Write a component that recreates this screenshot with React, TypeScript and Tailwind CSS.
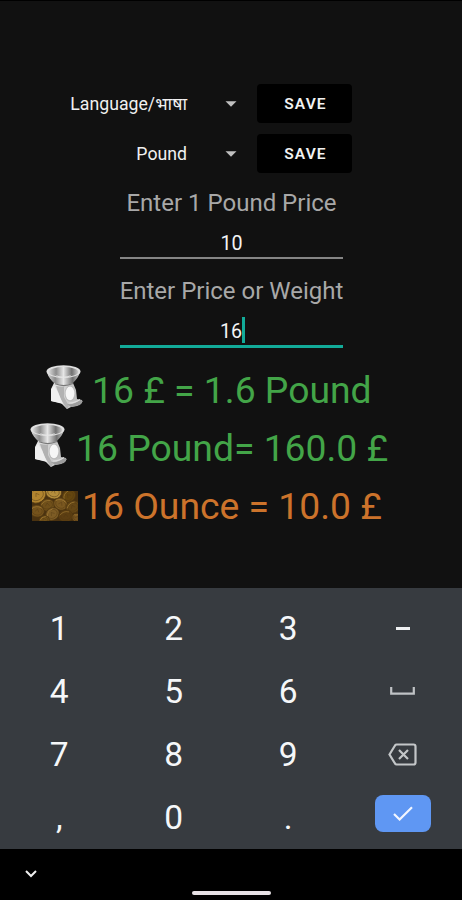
import React from "react";

function Caret() {
  return (
    <svg className="ml-[38px] h-[6px] w-[12px] shrink-0" viewBox="0 0 12 6">
      <path d="M0.5 0.3h11L6 5.8z" fill="#c0c0c0" />
    </svg>
  );
}

function SpinnerRow({ label }: { label: string }) {
  return (
    <div className="flex h-[39px] items-center">
      <div className="w-[187px] whitespace-nowrap pt-px text-right text-[17.7px] text-[#f0f0f0]">{label}</div>
      <Caret />
      <button className="ml-[20px] h-[39px] w-[95px] rounded-[4px] bg-black pl-[2px] pt-[2px] text-[15.5px] font-semibold tracking-[1.1px] text-[#f2f2f2]">
        SAVE
      </button>
    </div>
  );
}

function ScaleIcon() {
  return (
    <svg className="mb-[2px] h-[45px] w-[38px] shrink-0" viewBox="0 0 38 45">
      <defs>
        <linearGradient id="bowl" x1="0" x2="1">
          <stop offset="0" stopColor="#dadada" />
          <stop offset="0.25" stopColor="#8c8c8c" />
          <stop offset="0.5" stopColor="#e6e6e6" />
          <stop offset="0.78" stopColor="#707070" />
          <stop offset="1" stopColor="#cccccc" />
        </linearGradient>
        <linearGradient id="body" x1="0" x2="1">
          <stop offset="0" stopColor="#e8e8e8" />
          <stop offset="0.5" stopColor="#cfcfcf" />
          <stop offset="1" stopColor="#b4b4b4" />
        </linearGradient>
      </defs>
      <path d="M8 18H27L30 25L31 34L36 35V38L31 41L25 42L21 44L15 38L5 36V24Z" fill="url(#body)" />
      <path d="M10 21L14 33L21 44L23 41L18 32L18 22Z" fill="#b2b2b2" />
      <path d="M8 21L5 25V36L17 39L12 27Z" fill="#efefef" />
      <path d="M1 7C2 12 5 15 8 18Q18 22 27 18C30 15 33 11 34 7Z" fill="url(#bowl)" />
      <ellipse cx="17.5" cy="6.5" rx="17" ry="6.3" fill="#e0e0e0" />
      <ellipse cx="17.5" cy="7" rx="14.8" ry="4.9" fill="url(#bowl)" />
      <path d="M9 9.5Q17 14 26 9.5L22 12.5H13Z" fill="#eeeeee" opacity=".7" />
      <path d="M9 18.8Q18 22.5 27 18.5" stroke="#777" strokeWidth="1.2" fill="none" />
      <ellipse cx="24.2" cy="28.6" rx="5.6" ry="8" fill="#bbbbbb" />
      <ellipse cx="24" cy="28.4" rx="4.4" ry="6.8" fill="#f6f6f6" />
      <path d="M21 39Q28 40 34 35L37 36L34 40L25 42Z" fill="#9c9c9c" />
      <path d="M23 38Q29 38 34 34.5" stroke="#dedede" strokeWidth="1.2" fill="none" />
    </svg>
  );
}

const coins = [
  [36, 5, 7, "#65460f"], [15, 14, 7, "#70501a"], [28, 13, 7, "#7a5820"],
  [40, 16, 7, "#654716"], [5, 20, 7, "#75531c"], [20, 23, 7, "#7d5c25"],
  [33, 25, 7, "#5c3e12"], [44, 27, 5, "#75531f"], [12, 29, 5, "#705119"],
  [21, 1, 8, "#b48d3c"], [5, 4, 9, "#b1842f"],
] as const;

function CoinsPicture() {
  return (
    <svg className="mt-[4px] h-[30px] w-[46px] shrink-0" viewBox="0 0 45 30" preserveAspectRatio="none">
      <rect width="45" height="30" fill="#4a3210" />
      {coins.map(([x, y, r, fill], i) => (
        <g key={i} transform={`translate(${x} ${y}) rotate(${(i * 37) % 90 - 45})`}>
          <ellipse rx={r} ry={r * 0.86} fill={fill} stroke="#503711" strokeWidth="0.7" />
          <ellipse rx={r * 0.72} ry={r * 0.58} fill="none" stroke="#503711" strokeWidth="0.6" opacity=".7" />
          <path d={`M${-r * 0.8} -1Q${-r * 0.3} ${-r * 0.8} ${r * 0.5} ${-r * 0.55}`} stroke="#cfa24b" strokeWidth="0.8" fill="none" opacity=".5" />
          <path d="M-2 1L0-2L2 1" stroke="#4f3511" strokeWidth="0.6" fill="none" opacity=".6" />
        </g>
      ))}
    </svg>
  );
}

function Key({ children }: { children: React.ReactNode }) {
  return <div className="flex h-[63.2px] items-center justify-center">{children}</div>;
}

export default function App() {
  return (
    <div
      className="flex h-[900px] w-[462px] flex-col overflow-hidden bg-[#111111]"
      style={{ fontFamily: 'Roboto, "Noto Sans Devanagari", "Noto Sans", sans-serif' }}
    >
      <div className="h-px w-full shrink-0 bg-black" />
      <main className="flex h-[587px] shrink-0 flex-col pt-[83px]">
        <SpinnerRow label="Language/भाषा" />
        <div className="h-[11px]" />
        <SpinnerRow label="Pound" />

        <div className="mx-auto mt-[16px] h-[28px] whitespace-nowrap pl-px text-[24px] leading-[28px] text-[#a8a8a8]">Enter 1 Pound Price</div>
        <div className="mx-auto mt-[12px] flex h-[28px] w-[223px] items-center justify-center pl-px pt-[2px] text-[19.7px] text-[#f4f4f4]">10</div>
        <div className="mx-auto h-[2px] w-[223px] bg-[#858585]" />

        <div className="mx-auto mt-[18px] h-[28px] whitespace-nowrap pl-px text-[24px] leading-[28px] text-[#a8a8a8]">Enter Price or Weight</div>
        <div className="mx-auto mt-[11px] flex h-[29px] w-[223px] items-center justify-center pt-[2px] text-[19.7px] text-[#f4f4f4]">
          16<span className="-mr-[3px] mb-[3px] h-[26px] w-[3px] bg-[#12ab99]" />
        </div>
        <div className="mx-auto h-[3px] w-[223px] bg-[#12ab99]" />

        <div className="mt-[15px] flex h-[50px] items-center whitespace-nowrap pl-[46px] text-[37.3px] leading-none text-[#43a548]">
          <ScaleIcon />
          <span className="ml-[8px] mt-[6px]">16 £ = 1.6 Pound</span>
        </div>
        <div className="mt-[8px] flex h-[50px] items-center whitespace-nowrap pl-[30px] text-[37.3px] leading-none text-[#43a548]">
          <ScaleIcon />
          <span className="ml-[8px] mt-[6px]">16 Pound= 160.0 £</span>
        </div>
        <div className="mt-[8px] flex h-[50px] items-center whitespace-nowrap pl-[32px] text-[37.3px] leading-none text-[#cc732b]">
          <CoinsPicture />
          <span className="ml-[4px] mt-[6px]">16 Ounce = 10.0 £</span>
        </div>
      </main>

      <section className="grid h-[261px] shrink-0 grid-cols-4 content-start bg-[#373b40] px-[2px] pt-[9px] text-[33.5px] leading-none text-[#f5f7f9]">
        <Key>1</Key>
        <Key>2</Key>
        <Key>3</Key>
        <Key><span className="h-[3px] w-[14px] bg-[#eef0f2]" /></Key>
        <Key>4</Key>
        <Key>5</Key>
        <Key>6</Key>
        <Key>
          <svg className="mb-[2px] h-[8px] w-[25px]" viewBox="0 0 25 8">
            <path d="M1.2 0v6.7h22.6V0" fill="none" stroke="#bfc2c5" strokeWidth="2.2" />
          </svg>
        </Key>
        <Key>7</Key>
        <Key>8</Key>
        <Key>9</Key>
        <Key>
          <svg className="h-[23px] w-[29px]" viewBox="0 0 29 23" fill="none" stroke="#c3c6c8" strokeWidth="2.2">
            <path d="M8.6 1.5H25.5Q27.5 1.5 27.5 3.5V19.5Q27.5 21.5 25.5 21.5H8.6Q7.7 21.5 7 20.5L1.5 11.5L7 2.5Q7.7 1.5 8.6 1.5Z" />
            <path d="M11 7l9 9M20 7l-9 9" />
          </svg>
        </Key>
        <Key>,</Key>
        <Key>0</Key>
        <Key>.</Key>
        <Key>
          <div className="mb-[9px] flex h-[37px] w-[56px] items-center justify-center rounded-[8px] bg-[#5f97f3]">
            <svg className="h-[15px] w-[20px]" viewBox="0 0 20 15" fill="none" stroke="#f2f6ff" strokeWidth="2.2">
              <path d="M1 8l5.6 5.5L19 1.2" />
            </svg>
          </div>
        </Key>
      </section>

      <footer className="flex h-[51px] shrink-0 flex-col bg-black">
        <svg className="ml-[25px] mt-[21px] h-[8px] w-[12px]" viewBox="0 0 12 8" fill="none" stroke="#eeeeee" strokeWidth="2">
          <path d="M1 1l5 5 5-5" />
        </svg>
        <div className="mx-auto mt-[13px] h-[4px] w-[79px] rounded-full bg-[#e8e2e6]" />
      </footer>
    </div>
  );
}
